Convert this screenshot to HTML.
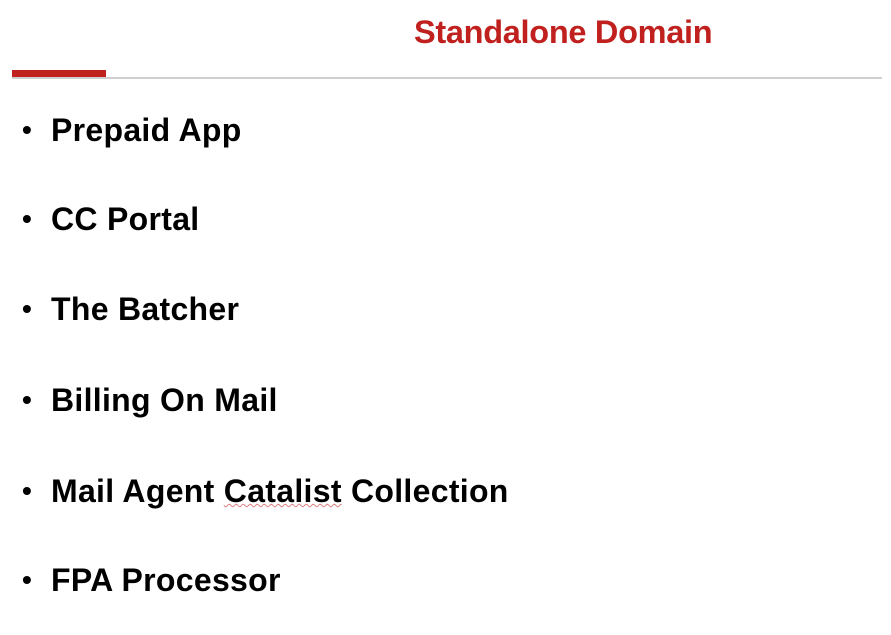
<!DOCTYPE html>
<html><head><style>
body{margin:0;width:891px;height:635px;background:#fff;overflow:hidden;position:relative;font-family:"Liberation Sans",sans-serif;font-weight:bold}
.t{position:absolute;left:414px;top:14px;font-size:32.5px;color:#c0201e;white-space:nowrap;letter-spacing:-0.3px}
.rb{position:absolute;left:12px;top:70px;width:94px;height:7px;background:#c0201e}
.gl{position:absolute;left:12px;top:77px;width:870px;height:2px;background:#cfcfcf}
.i{position:absolute;left:22px;font-size:32px;color:#000;white-space:nowrap;letter-spacing:0.3px}
.i span{position:absolute;left:0;font-size:28px;top:2px}
.i b{margin-left:29px}
</style></head><body>
<div class="t">Standalone Domain</div>
<div class="rb"></div><div class="gl"></div>
<div class="i" style="top:112px"><span>•</span><b>Prepaid App</b></div>
<div class="i" style="top:201px"><span>•</span><b>CC Portal</b></div>
<div class="i" style="top:291px"><span>•</span><b>The Batcher</b></div>
<div class="i" style="top:382px"><span>•</span><b>Billing On Mail</b></div>
<div class="i" style="top:473px"><span>•</span><b>Mail Agent <u style="text-decoration:underline wavy #e08080;text-decoration-thickness:1px">Catalist</u> Collection</b></div>
<div class="i" style="top:562px"><span>•</span><b>FPA Processor</b></div>
</body></html>
